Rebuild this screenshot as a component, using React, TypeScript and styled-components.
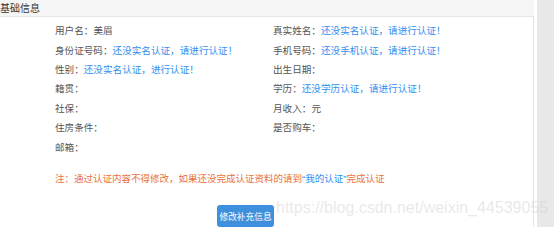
import styled, { createGlobalStyle } from "styled-components";

const GlobalStyle = createGlobalStyle`
  html, body {
    margin: 0;
    padding: 0;
    background: #fff;
  }
  body {
    font-family: "Noto Sans CJK SC", "Liberation Sans", sans-serif;
    color: #555;
  }
`;

const Page = styled.div`
  position: relative;
  display: flex;
  width: 554px;
  height: 227px;
  overflow: hidden;
`;

const Panel = styled.section`
  width: 534px;
  display: flex;
  flex-direction: column;
`;

const PanelHeader = styled.header`
  height: 16px;
  line-height: 16px;
  background: #f5f5f5;
  border-bottom: 1px solid #e6e6e6;
  font-size: 10px;
  color: #333;
`;

const PanelBody = styled.div`
  flex: 1;
  border-right: 1px solid #e3e3e3;
  padding: 4.3px 0 0 55px;
`;

const InfoGrid = styled.div`
  display: grid;
  grid-template-columns: 218px 1fr;
`;

const Field = styled.div`
  height: 19.4px;
  line-height: 19.4px;
  font-size: 9.6px;
  color: #555;
  white-space: nowrap;
`;

const Hint = styled.span`
  color: #2f8ef0;
`;

const Quote = styled.span`
  font-family: "Liberation Sans", Arial, sans-serif;
`;

const Note = styled.p`
  margin: 12.2px 0 0;
  height: 19.4px;
  line-height: 19.4px;
  font-size: 9.5px;
  color: #e9713d;
  white-space: nowrap;
`;

const ButtonRow = styled.div`
  margin-top: 12.3px;
  padding-left: 162px;
`;

const PrimaryButton = styled.button`
  width: 57px;
  height: 22px;
  padding: 0;
  border: none;
  border-radius: 3px;
  background: #3f90dc;
  color: #fff;
  font-family: "Noto Sans CJK SC", "Liberation Sans", sans-serif;
  font-size: 8.7px;
  cursor: pointer;
`;

const Gutter = styled.div`
  width: 3px;
  background: #fff;
`;

const ScrollTrack = styled.div`
  flex: 1;
  background: #e8e8e8;
`;

const Watermark = styled.div`
  position: absolute;
  left: 276px;
  top: 199px;
  font-family: "Liberation Sans", Arial, sans-serif;
  font-size: 16px;
  color: rgba(205, 205, 205, 0.45);
  pointer-events: none;
  white-space: nowrap;
`;

const fields: [string, string, string?][] = [
  ["用户名：", "美眉"],
  ["真实姓名：", "", "还没实名认证，请进行认证！"],
  ["身份证号码：", "", "还没实名认证，请进行认证！"],
  ["手机号码：", "", "还没手机认证，请进行认证！"],
  ["性别：", "", "还没实名认证，进行认证！"],
  ["出生日期：", ""],
  ["籍贯：", ""],
  ["学历：", "", "还没学历认证，请进行认证！"],
  ["社保：", ""],
  ["月收入：", "元"],
  ["住房条件：", ""],
  ["是否购车：", ""],
  ["邮箱：", ""],
];

export default function App() {
  return (
    <>
      <GlobalStyle />
      <Page>
        <Panel>
          <PanelHeader>基础信息</PanelHeader>
          <PanelBody>
            <InfoGrid>
              {fields.map(([label, value, hint]) => (
                <Field key={label}>
                  {label}
                  {value}
                  {hint && <Hint>{hint}</Hint>}
                </Field>
              ))}
            </InfoGrid>
            <Note>
              注：通过认证内容不得修改，如果还没完成认证资料的请到
              <Hint>
                <Quote>“</Quote>我的认证<Quote>”</Quote>
              </Hint>
              完成认证
            </Note>
            <ButtonRow>
              <PrimaryButton type="button">修改补充信息</PrimaryButton>
            </ButtonRow>
          </PanelBody>
        </Panel>
        <Gutter />
        <ScrollTrack />
        <Watermark>https://blog.csdn.net/weixin_44539055</Watermark>
      </Page>
    </>
  );
}
